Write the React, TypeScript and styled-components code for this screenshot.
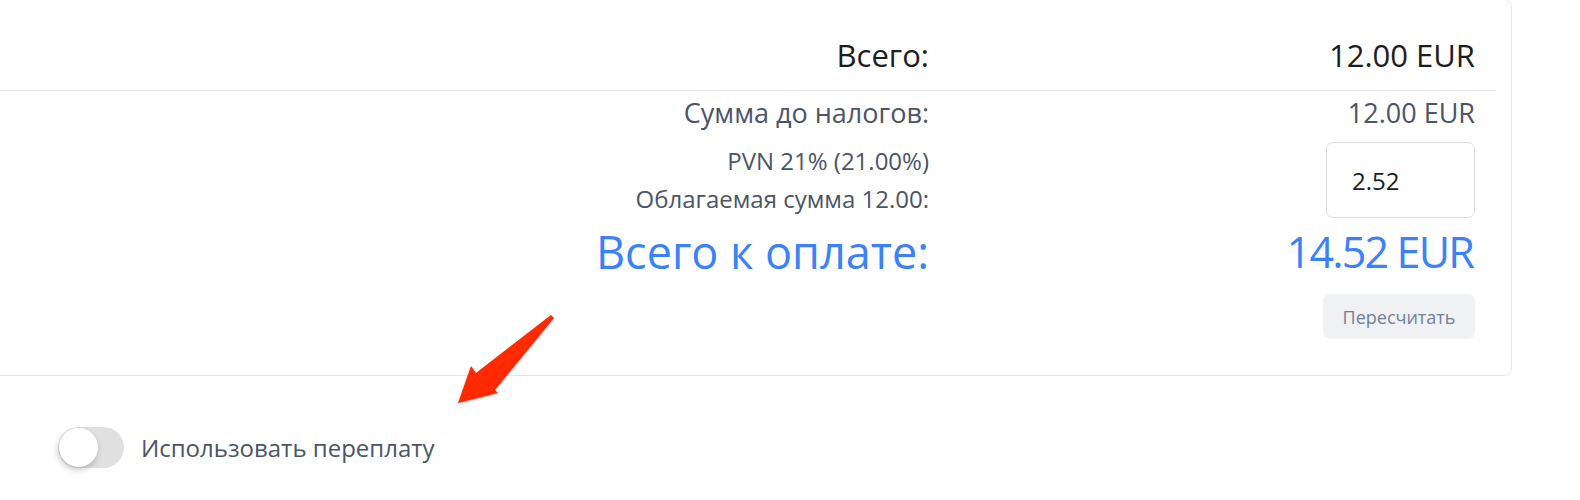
import React from 'react'
import styled, { createGlobalStyle } from 'styled-components'

const GlobalStyle = createGlobalStyle`
  html, body {
    margin: 0;
    padding: 0;
    background: #ffffff;
    font-family: 'Open Sans', 'Noto Sans', sans-serif;
    overflow: hidden;
  }
`

const Page = styled.div`
  position: relative;
  width: 1580px;
  height: 500px;
  display: flex;
  flex-direction: column;
`

const Card = styled.div`
  margin: -1px 0 0 -10px;
  width: 1522px;
  background: #fff;
  border: 1px solid #e6e7eb;
  border-radius: 0 8px 8px 0;
  padding: 0 15px 36px 0;
  box-sizing: border-box;
`

const Row = styled.div<{ $divider?: boolean; $pt?: number; $pb?: number }>`
  display: flex;
  justify-content: flex-end;
  align-items: center;
  padding: ${p => p.$pt ?? 0}px 21px ${p => p.$pb ?? 0}px 0;
  border-bottom: ${p => (p.$divider ? '1px solid #e9ebee' : 'none')};
`

const Label = styled.div<{ $size: number; $color: string; $lh: number }>`
  text-align: right;
  font-size: ${p => p.$size}px;
  line-height: ${p => p.$lh}px;
  color: ${p => p.$color};
`

const Value = styled.div<{ $size: number; $color: string; $lh: number }>`
  width: 546px;
  display: flex;
  justify-content: flex-end;
  font-size: ${p => p.$size}px;
  line-height: ${p => p.$lh}px;
  color: ${p => p.$color};
`

const GrandTotal = styled.span`
  letter-spacing: -1.8px;
  margin-right: 2px;
`

const TaxInput = styled.input`
  width: 149px;
  height: 76px;
  box-sizing: border-box;
  border: 1px solid #dcdde0;
  border-radius: 7px;
  padding: 0 0 0 25px;
  font-family: inherit;
  font-size: 24px;
  color: #1c1c1c;
  outline: none;
`

const Recalc = styled.button`
  width: 152px;
  height: 45px;
  border: none;
  border-radius: 7px;
  background: #f0f1f3;
  color: #718096;
  font-family: inherit;
  font-size: 18px;
  cursor: pointer;
`

const ToggleRow = styled.label`
  display: flex;
  align-items: center;
  gap: 17px;
  margin: 51px 0 0 58px;
  font-size: 24px;
  color: #4a5568;
`

const Track = styled.span`
  position: relative;
  width: 66px;
  height: 41px;
  border-radius: 21px;
  background: #e0e0e0;
  flex-shrink: 0;
`

const Knob = styled.span`
  position: absolute;
  left: 1px;
  top: 1px;
  width: 39px;
  height: 39px;
  border-radius: 50%;
  background: #fff;
  box-shadow: -1px 3px 6px rgba(0, 0, 0, 0.22);
`

const Arrow = styled.svg`
  position: absolute;
  left: 450px;
  top: 310px;
  overflow: visible;
`

const dark = '#1d1d1f'
const muted = '#4a5568'
const blue = '#3b82f6'

export default function App() {
  return (
    <Page>
      <GlobalStyle />
      <Card>
        <Row $divider $pt={36} $pb={16}>
          <Label $size={31} $lh={38} $color={dark}>Всего:</Label>
          <Value $size={31} $lh={38} $color={dark}>12.00 EUR</Value>
        </Row>
        <Row $pt={4}>
          <Label $size={27} $lh={36} $color={muted}>Сумма до налогов:</Label>
          <Value $size={27} $lh={36} $color={muted}>12.00 EUR</Value>
        </Row>
        <Row $pt={11}>
          <Label $size={24} $lh={38} $color={muted}>
            PVN 21% (21.00%)
            <br />
            Облагаемая сумма 12.00:
          </Label>
          <Value $size={24} $lh={38} $color={muted}>
            <TaxInput defaultValue="2.52" />
          </Value>
        </Row>
        <Row $pt={6}>
          <Label $size={45} $lh={56} $color={blue}>Всего к оплате:</Label>
          <Value $size={43} $lh={56} $color={blue}>
            <GrandTotal>14.52 EUR</GrandTotal>
          </Value>
        </Row>
        <Row $pt={14}>
          <Value $size={18} $lh={45} $color={muted}>
            <Recalc>Пересчитать</Recalc>
          </Value>
        </Row>
      </Card>
      <ToggleRow>
        <Track>
          <Knob />
        </Track>
        Использовать переплату
      </ToggleRow>
      <Arrow width="110" height="100" viewBox="0 0 110 100">
        <defs>
          <filter id="sh" x="-20%" y="-20%" width="140%" height="140%">
            <feDropShadow dx="0" dy="1" stdDeviation="1" floodColor="#000" floodOpacity="0.25" />
          </filter>
        </defs>
        <path
          d="M101 5 L104 8 L45 80 L48 83 L8 93 L21 56 L26 63 Z"
          fill="#ff2a00"
          filter="url(#sh)"
        />
      </Arrow>
    </Page>
  )
}
